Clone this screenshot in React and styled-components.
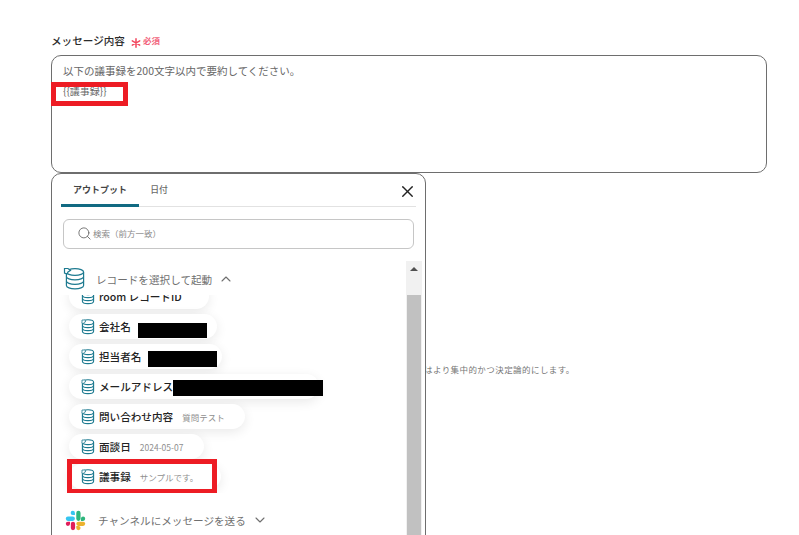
import styled, { createGlobalStyle } from 'styled-components';
import { Search, X, ChevronUp, ChevronDown } from 'lucide-react';

const GlobalStyle = createGlobalStyle`
  html, body {
    margin: 0;
    padding: 0;
    background: #ffffff;
    overflow: hidden;
  }
  * {
    box-sizing: border-box;
  }
`;

const FONT = `"Noto Sans CJK JP", "Noto Sans", sans-serif`;

const Page = styled.div`
  position: relative;
  width: 799px;
  height: 535px;
  padding: 32px 32px 0 51px;
  overflow: hidden;
  font-family: ${FONT};
  color: #333;
`;

const LabelRow = styled.div`
  display: flex;
  align-items: center;
  height: 16px;
  margin-bottom: 7px;
`;

const Label = styled.span`
  font-size: 10.6px;
  font-weight: 500;
  color: #2b2b2b;
`;

const Asterisk = styled.svg`
  width: 10px;
  height: 10px;
  margin: 5px 2px 0 6px;
`;

const Required = styled.span`
  font-size: 8.5px;
  font-weight: 700;
  color: #f2627a;
`;

const TextBox = styled.div`
  position: relative;
  width: 716px;
  height: 118px;
  padding: 6px 11px;
  border: 1px solid #6e6e6e;
  border-radius: 10px;
  color: #666;
`;

const TextLine = styled.div`
  height: ${(p) => p.$height}px;
  line-height: ${(p) => p.$height}px;
  font-size: ${(p) => p.$size}px;
`;

const VariableMark = styled.div`
  position: absolute;
  left: -1px;
  top: 26px;
  width: 77px;
  height: 24px;
  border: 5px solid #ed1c24;
`;

const Hint = styled.p`
  margin: 189px 0 0 284px;
  font-size: 8.5px;
  line-height: 14px;
  color: #777;
  letter-spacing: 0.43px;
  white-space: nowrap;
`;

const Popup = styled.div`
  position: absolute;
  left: 51px;
  top: 173px;
  width: 375px;
  height: 380px;
  background: #fff;
  border: 1px solid #6e6e6e;
  border-radius: 10px;
`;

const TabBar = styled.div`
  display: flex;
  align-items: stretch;
  justify-content: space-between;
  height: 33px;
  margin: 0 9px 0 9px;
  border-bottom: 1px solid #e2e2e2;
`;

const Tabs = styled.div`
  display: flex;
`;

const Tab = styled.div`
  width: ${(p) => p.$width}px;
  height: 33px;
  display: flex;
  align-items: center;
  justify-content: center;
  padding-bottom: ${(p) => (p.$active ? '0' : '3px')};
  font-size: ${(p) => (p.$active ? 9 : 8.8)}px;
  font-weight: ${(p) => (p.$active ? 700 : 500)};
  color: ${(p) => (p.$active ? '#444' : '#6a6a6a')};
  border-bottom: ${(p) => (p.$active ? '3px solid #116a82' : 'none')};
`;

const CloseButton = styled.div`
  display: flex;
  align-items: center;
  margin-top: 2px;
  margin-right: -1px;
  color: #222;
`;

const SearchBox = styled.div`
  display: flex;
  align-items: center;
  gap: 1px;
  height: 30px;
  margin: 12px 11px 0 11px;
  padding: 0 0 2px 13px;
  border: 1px solid #c6c6c6;
  border-radius: 6px;
  font-size: 8.5px;
  color: #8a8a8a;
`;

const Body = styled.div`
  display: flex;
  justify-content: space-between;
  margin-top: 12px;
  padding-right: 3px;
`;

const Content = styled.div`
  width: 350px;
`;

const SectionHead = styled.div`
  display: flex;
  align-items: center;
  height: ${(p) => p.$height}px;
  padding-left: ${(p) => p.$indent}px;
  padding-top: ${(p) => p.$drop}px;
  font-size: 10.6px;
  color: #6f6f6f;
`;

const SectionTitle = styled.span`
  margin-left: ${(p) => p.$gap}px;
  margin-right: 6px;
`;

const ChipViewport = styled.div`
  height: 198px;
  overflow: hidden;
  padding: 4px 0 0 17px;
`;

const ChipList = styled.div`
  display: flex;
  flex-direction: column;
  align-items: flex-start;
  gap: 5px;
  margin-top: -15px;
`;

const Chip = styled.div`
  position: relative;
  display: flex;
  align-items: center;
  width: ${(p) => p.$width}px;
  height: 25px;
  padding-left: 12px;
  background: #fff;
  border-radius: 13px;
  box-shadow: 0 3px 12px rgba(0, 0, 0, 0.09);

  svg {
    flex: none;
  }
`;

const ChipName = styled.span`
  margin-left: 4px;
  font-size: 10.6px;
  font-weight: 500;
  color: #222;
  white-space: nowrap;
`;

const ChipValue = styled.span`
  margin-left: 9px;
  font-size: 8.5px;
  color: #8f8f8f;
  white-space: nowrap;
`;

const Redacted = styled.span`
  display: block;
  flex: none;
  width: ${(p) => p.$width}px;
  height: ${(p) => p.$height}px;
  margin-left: ${(p) => p.$gap}px;
  margin-top: ${(p) => p.$drop}px;
  background: #000;
`;

const ChipMark = styled.div`
  position: absolute;
  left: -2px;
  top: -5px;
  width: 150px;
  height: 35px;
  border: 5px solid #ed1c24;
`;

const Scrollbar = styled.div`
  width: 16px;
  height: 290px;
  background: #f1f1f1;
  display: flex;
  flex-direction: column;
  align-items: center;
`;

const ScrollArrow = styled.div`
  height: 34px;
  width: 100%;
  display: flex;
  justify-content: center;
  padding-top: 6px;
`;

const ArrowGlyph = styled.div`
  width: 0;
  height: 0;
  border-left: 4px solid transparent;
  border-right: 4px solid transparent;
  border-bottom: 4px solid #505050;
`;

const ScrollThumb = styled.div`
  width: 14px;
  flex: 1;
  background: #c1c1c1;
`;

function DbIcon() {
  return (
    <svg width="14" height="16" viewBox="0 0 14 16" fill="none" stroke="#1d7a90" strokeWidth="1.1">
      <ellipse cx="7" cy="3.2" rx="5.6" ry="2.4" />
      <path d="M1.4 3.2v3c0 1.3 2.500 2.400 5.600 2.400s5.600-1.100 5.600-2.400v-3" />
      <path d="M1.4 6.2v3c0 1.3 2.500 2.400 5.600 2.400s5.600-1.100 5.600-2.400v-3" />
      <path d="M1.4 9.2v3c0 1.3 2.500 2.400 5.600 2.400s5.600-1.100 5.600-2.400v-3" />
      <path d="M1 1h2.500L5 2.400 3 3.500 2.400 5 1 4.300z" fill="#fff" strokeWidth="0.8" />
    </svg>
  );
}

function BigDbIcon() {
  return (
    <svg width="22" height="24" viewBox="0 0 22 24" fill="none" stroke="#1d7a90" strokeWidth="1.2">
      <ellipse cx="12" cy="5" rx="8.6" ry="3.4" fill="#fff" />
      <path d="M3.4 5v4.500c0 1.900 3.900 3.400 8.600 3.400s8.600-1.500 8.600-3.400V5" />
      <path d="M3.400 9.500V14c0 1.900 3.900 3.400 8.600 3.400s8.600-1.500 8.600-3.400V9.500" />
      <path d="M3.400 14v4.500c0 1.900 3.900 3.400 8.600 3.400s8.600-1.500 8.600-3.400V14" />
      <path d="M1.500 1.500h3.500L7.500 3.500 5 5 4 7 1.500 6z" fill="#fff" />
    </svg>
  );
}

function SlackIcon() {
  return (
    <svg width="21" height="21" viewBox="0 0 54 54">
      <g fill="#36c5f0">
        <path d="M20 2a5.500 5.500 0 0 0 0 11h5.500V7.500A5.500 5.500 0 0 0 20 2z" />
        <rect x="2" y="17" width="23.500" height="11" rx="5.500" />
      </g>
      <g fill="#2eb67d">
        <path d="M52 22.500a5.500 5.500 0 0 0-11 0V28h5.500a5.500 5.500 0 0 0 5.500-5.500z" />
        <rect x="29" y="2" width="11" height="26" rx="5.500" />
      </g>
      <g fill="#ecb22e">
        <path d="M34.500 52a5.500 5.500 0 0 0 0-11H29v5.500a5.500 5.500 0 0 0 5.500 5.500z" />
        <rect x="29" y="30" width="23" height="11" rx="5.500" />
      </g>
      <g fill="#e01e5a">
        <path d="M2 35.500a5.500 5.500 0 0 0 11 0V30H7.500A5.500 5.500 0 0 0 2 35.500z" />
        <rect x="15" y="30" width="11" height="22" rx="5.500" />
      </g>
    </svg>
  );
}

const chips = [
  { name: 'room レコードID', width: 140 },
  { name: '会社名', width: 148, redact: { width: 69, height: 15, gap: 7, drop: 7 } },
  { name: '担当者名', width: 153, redact: { width: 69, height: 16, gap: 7, drop: 5 } },
  { name: 'メールアドレス', width: 250, redact: { width: 150, height: 16, gap: 0, drop: 3 } },
  { name: '問い合わせ内容', width: 176, value: '質問テスト' },
  { name: '面談日', width: 135, value: '2024-05-07' },
  { name: '議事録', width: 152, value: 'サンプルです。', marked: true },
];

export default function App() {
  return (
    <Page>
      <GlobalStyle />
      <LabelRow>
        <Label>メッセージ内容</Label>
        <Asterisk viewBox="0 0 10 10" stroke="#f2485f" strokeWidth="1.5" strokeLinecap="round">
          <path d="M5 .8v8.400M1.300 2.800l7.400 4.400M8.700 2.800L1.300 7.200" />
        </Asterisk>
        <Required>必須</Required>
      </LabelRow>
      <TextBox>
        <TextLine $size={10.5} $height={18}>以下の議事録を200文字以内で要約してください。</TextLine>
        <TextLine $size={10} $height={22}>{'{{議事録}}'}</TextLine>
        <VariableMark />
      </TextBox>
      <Hint>値を低くすると、回答はより集中的かつ決定論的にします。</Hint>

      <Popup>
        <TabBar>
          <Tabs>
            <Tab $active $width={78}>アウトプット</Tab>
            <Tab $width={40}>日付</Tab>
          </Tabs>
          <CloseButton>
            <X size={19} strokeWidth={1.7} />
          </CloseButton>
        </TabBar>
        <SearchBox>
          <Search size={15} strokeWidth={1.4} color="#666" />
          検索（前方一致）
        </SearchBox>
        <Body>
          <Content>
            <SectionHead $height={34} $indent={11} $drop={2}>
              <BigDbIcon />
              <SectionTitle $gap={11}>レコードを選択して起動</SectionTitle>
              <ChevronUp size={16} strokeWidth={1.6} />
            </SectionHead>
            <ChipViewport>
              <ChipList>
                {chips.map((chip) => (
                  <Chip key={chip.name} $width={chip.width}>
                    <DbIcon />
                    <ChipName>{chip.name}</ChipName>
                    {chip.value && <ChipValue>{chip.value}</ChipValue>}
                    {chip.redact && (
                      <Redacted
                        $width={chip.redact.width}
                        $height={chip.redact.height}
                        $gap={chip.redact.gap}
                        $drop={chip.redact.drop}
                      />
                    )}
                    {chip.marked && <ChipMark />}
                  </Chip>
                ))}
              </ChipList>
            </ChipViewport>
            <SectionHead $height={54} $indent={13} $drop={0}>
              <SlackIcon />
              <SectionTitle $gap={12}>チャンネルにメッセージを送る</SectionTitle>
              <ChevronDown size={16} strokeWidth={1.6} />
            </SectionHead>
          </Content>
          <Scrollbar>
            <ScrollArrow>
              <ArrowGlyph />
            </ScrollArrow>
            <ScrollThumb />
          </Scrollbar>
        </Body>
      </Popup>
    </Page>
  );
}
